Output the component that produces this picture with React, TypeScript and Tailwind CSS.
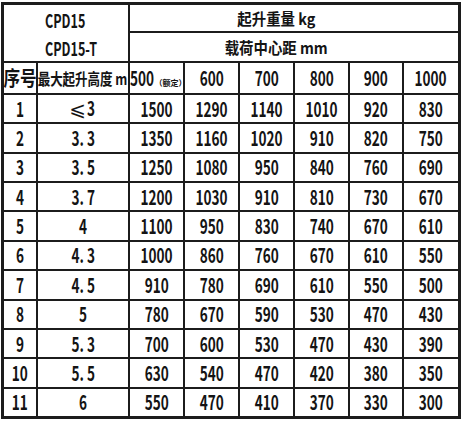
import React from 'react';

const rows: [string, string, string[]][] = [
  ['1', '⩽3', ['1500', '1290', '1140', '1010', '920', '830']],
  ['2', '3.3', ['1350', '1160', '1020', '910', '820', '750']],
  ['3', '3.5', ['1250', '1080', '950', '840', '760', '690']],
  ['4', '3.7', ['1200', '1030', '910', '810', '730', '670']],
  ['5', '4', ['1100', '950', '830', '740', '670', '610']],
  ['6', '4.3', ['1000', '860', '760', '670', '610', '550']],
  ['7', '4.5', ['910', '780', '690', '610', '550', '500']],
  ['8', '5', ['780', '670', '590', '530', '470', '430']],
  ['9', '5.3', ['700', '600', '530', '470', '430', '390']],
  ['10', '5.5', ['630', '540', '470', '420', '380', '350']],
  ['11', '6', ['550', '470', '410', '370', '330', '300']],
];

// the source font is a narrow 黑体 — squeeze Noto horizontally to match
const N: React.FC<{ children: React.ReactNode; className?: string }> = ({ children, className = '' }) => (
  <span className={`inline-block scale-x-[0.68] whitespace-nowrap ${className}`}>{children}</span>
);

const cell = 'bg-white flex items-center justify-center whitespace-nowrap text-[20px] leading-none';

export default function App() {
  return (
    <div className="w-[462px] h-[422px] bg-white pl-[1px] pt-[2px] font-['Noto_Sans_CJK_SC',sans-serif] font-semibold text-[#141414]">
      <div className="grid w-fit grid-cols-[32px_90px_53px_53px_53px_53px_52px_54px] grid-rows-[26px_28px_30px_repeat(11,27.36px)] gap-[2px] bg-[#1c1c1c] p-[3px]">
        {/* ── Header ─────────────────────────────────────── */}
        <div className="col-span-2 row-span-2 flex flex-col bg-white pl-[41px] pt-[1px] text-[19px] leading-[28px]">
          <N className="origin-left !scale-x-[0.66]">CPD15</N>
          <N className="origin-left !scale-x-[0.66]">CPD15-T</N>
        </div>
        <div className={`${cell} col-span-6 pr-[36px] !text-[16px]`}>
          <span className="inline-block scale-x-[0.9]">起升重量 kg</span>
        </div>
        <div className={`${cell} col-span-6 pr-[36px] !text-[16px]`}>
          <span className="inline-block scale-x-[0.9]">载荷中心距 mm</span>
        </div>

        <div className={cell}>
          <span className="inline-block scale-x-[0.83]">序号</span>
        </div>
        <div className={`${cell} !text-[16px]`}>
          <span className="inline-block scale-x-[0.78]">最大起升高度 m</span>
        </div>
        <div className={`${cell} !justify-start`}>
          <span className="inline-flex items-end">
            <N className="origin-left">500</N>
            <span className="-ml-[11px] mb-[1px] text-[8px] font-bold">（额定）</span>
          </span>
        </div>
        {['600', '700', '800', '900', '1000'].map((v) => (
          <div key={v} className={cell}>
            <N>{v}</N>
          </div>
        ))}

        {/* ── Rows ───────────────────────────────────────── */}
        {rows.map(([no, h, vals]) => (
          <React.Fragment key={no}>
            <div className={cell}>
              <N>{no}</N>
            </div>
            <div className={cell}>
              {h.startsWith('⩽') ? (
                <span className="inline-flex items-baseline">
                  <span className="font-['DejaVu_Sans',sans-serif] text-[20px] font-normal">⩽</span>
                  <N className="-ml-[1px]">3</N>
                </span>
              ) : (
                <N>{h.replace('.', '. ')}</N>
              )}
            </div>
            {vals.map((v, i) => (
              <div key={i} className={cell}>
                <N>{v}</N>
              </div>
            ))}
          </React.Fragment>
        ))}
      </div>
    </div>
  );
}
